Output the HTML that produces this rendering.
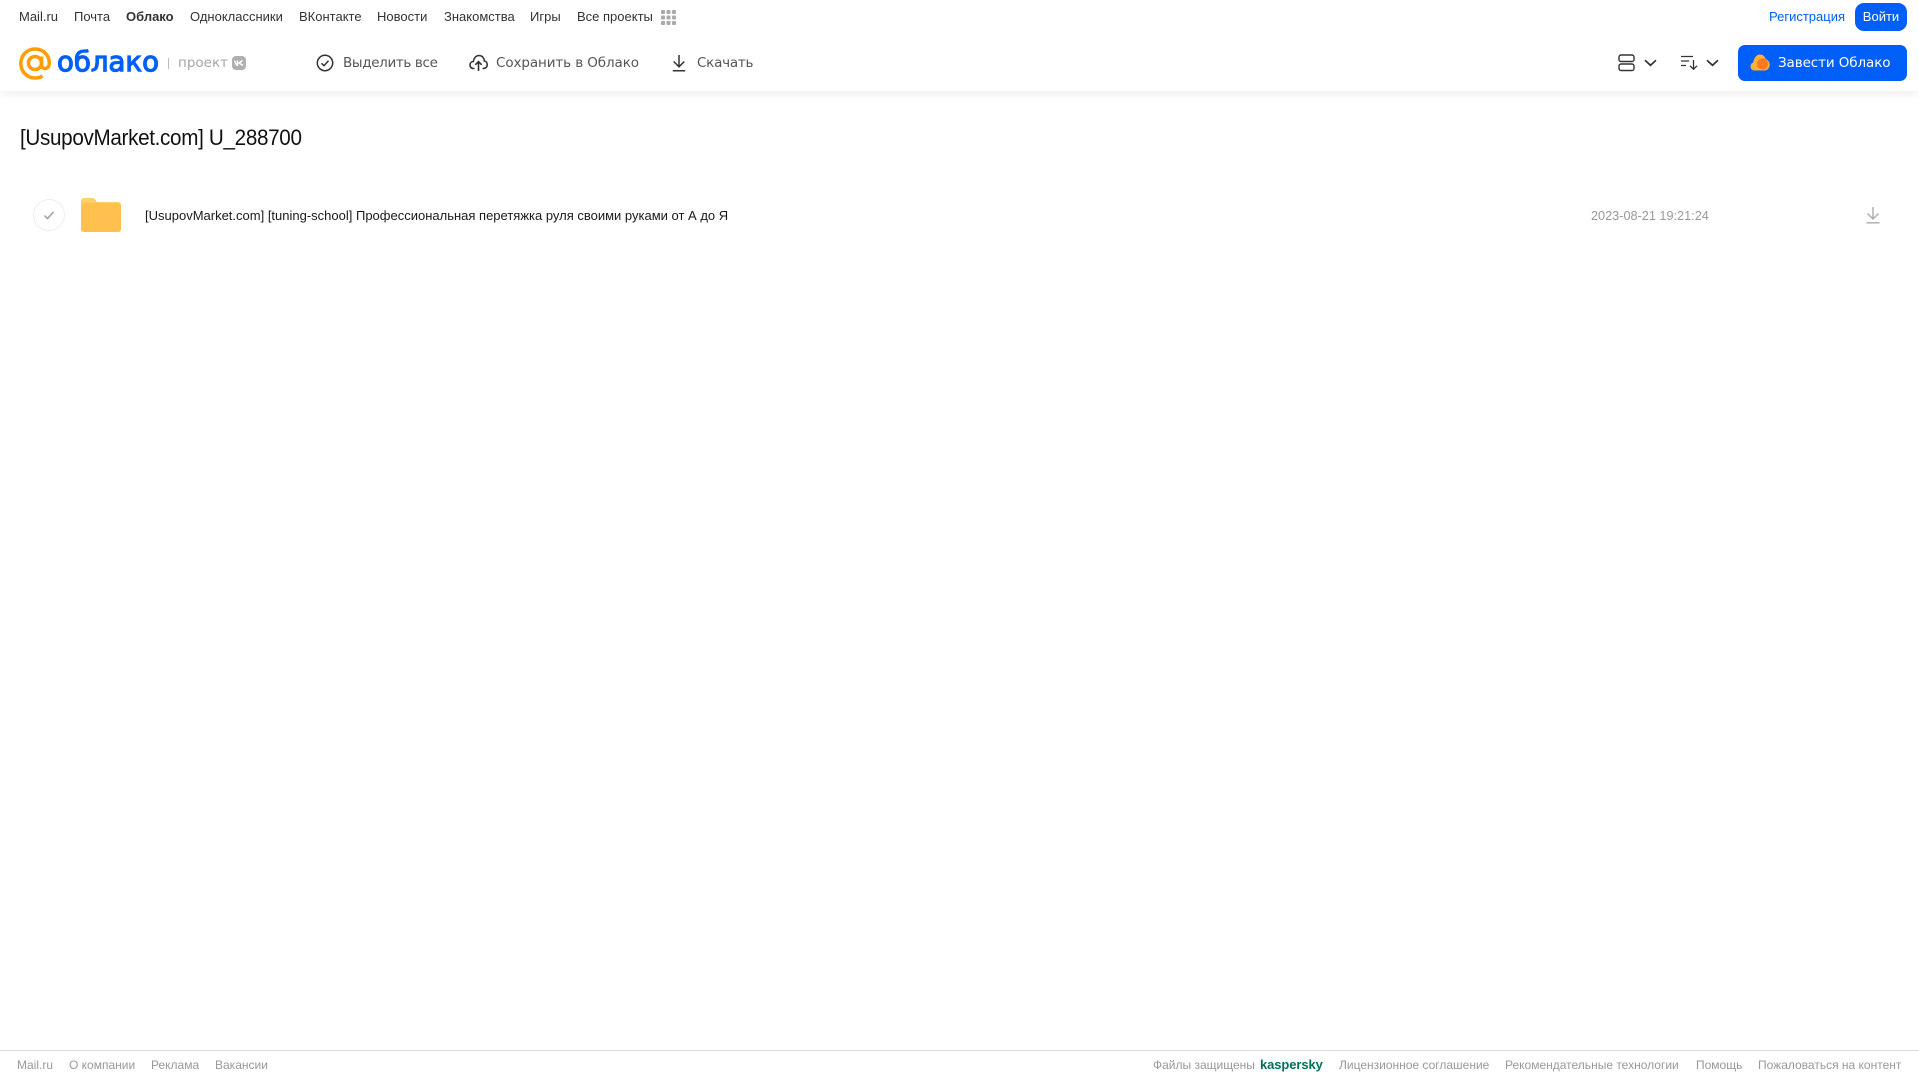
<!DOCTYPE html>
<html lang="ru"><head><meta charset="utf-8"><title>Облако</title>
<style>
html,body{margin:0;padding:0;background:#fff;width:1919px;height:1079px;overflow:hidden}
body{position:relative;font-family:"Liberation Sans",sans-serif}
.t{position:absolute;white-space:nowrap;line-height:20px;height:20px}
.n{top:7px;font-size:13px;color:#333}
.a{top:53px;color:#555;font-family:"DejaVu Sans","Liberation Sans",sans-serif;font-size:13.5px;letter-spacing:-.1px}
.f{top:1055px;font-size:12px;color:#999}
svg{position:absolute;overflow:visible}
</style></head><body>
<div style="position:absolute;left:0;top:0;width:1919px;height:91px;background:#fff;box-shadow:0 2px 10px rgba(0,0,0,.08)"></div>

<span class="t n" style="left:19px">Mail.ru</span>
<span class="t n" style="left:74px">Почта</span>
<span class="t n" style="left:126px;font-weight:bold">Облако</span>
<span class="t n" style="left:190px">Одноклассники</span>
<span class="t n" style="left:299px">ВКонтакте</span>
<span class="t n" style="left:377px">Новости</span>
<span class="t n" style="left:444px">Знакомства</span>
<span class="t n" style="left:530px">Игры</span>
<span class="t n" style="left:577px">Все проекты</span>
<svg style="left:661px;top:10px" width="15" height="15" fill="#aaa"><rect x="0" y="0" width="4" height="4" rx="1"/><rect x="5.5" y="0" width="4" height="4" rx="1"/><rect x="11" y="0" width="4" height="4" rx="1"/><rect x="0" y="5.500" width="4" height="4" rx="1"/><rect x="5.5" y="5.500" width="4" height="4" rx="1"/><rect x="11" y="5.500" width="4" height="4" rx="1"/><rect x="0" y="11" width="4" height="4" rx="1"/><rect x="5.5" y="11" width="4" height="4" rx="1"/><rect x="11" y="11" width="4" height="4" rx="1"/></svg>

<span class="t n" style="left:1769px;color:#005ff9">Регистрация</span>
<div class="t" style="left:1855px;top:3px;width:52px;height:28px;line-height:27px;background:#005ff9;border-radius:9px;color:#fff;font-size:13px;text-align:center">Войти</div>

<svg style="left:19px;top:47px" width="33" height="33" viewBox="0 0 33 33" fill="none" stroke="#ff9e00" stroke-width="3.500"><circle cx="16" cy="16" r="6.500"/><path d="M22.500 9.500v8.500c0 5 7.800 5 7.800-2C30.300 8 24 2 16 2 8 2 1.800 8.500 1.800 16.500S8 31 16 31c3 0 5.500-.7 7.500-2"/></svg>
<span class="t" style="left:57px;top:47px;height:30px;line-height:30px;font-size:28px;color:#005ff9;-webkit-text-stroke:1.200px #005ff9;font-family:'DejaVu Sans',sans-serif;transform-origin:0 50%;transform:scaleX(.985)">облако</span>
<div style="position:absolute;left:168px;top:58px;width:1px;height:11px;background:#bbb"></div>
<span class="t a" style="left:178px;top:53px;color:#a5a5a5;font-size:13.5px;letter-spacing:0">проект</span>
<div style="position:absolute;left:232px;top:56px;width:14px;height:14px;border-radius:4px;background:#b0b0b0"></div>
<svg style="left:234px;top:60px" width="10" height="6" fill="none" stroke="#fff" stroke-width="1.400"><path d="M.5 .5l2 4.500h1V.5M8.500 .5L5 3l4 2.500"/></svg>

<svg style="left:316px;top:54px" width="18" height="18" fill="none" stroke="#333" stroke-width="1.500"><circle cx="9" cy="9" r="7.700"/><path d="M5.500 9.300l2.500 2.400 4.500-5"/></svg>
<span class="t a" style="left:343px;letter-spacing:-.35px">Выделить все</span>
<svg style="left:469px;top:54px" width="19" height="18" fill="none" stroke="#333" stroke-width="1.600"><path d="M5.500 14.500H4.500C2 14.500 1 12.500 1 11c0-2 1.500-3.400 3.300-3.500C5 4 7 1.500 10 1.500c3.200 0 5.200 2.500 5.400 5.500 1.700.2 2.800 1.800 2.800 3.700 0 2-1.400 3.800-3.700 3.800h-1"/><path d="M9.500 17V8M6.300 10.800l3.200-3.200 3.200 3.200"/></svg>
<span class="t a" style="left:496px">Сохранить в Облако</span>
<svg style="left:672px;top:54px" width="14" height="18" fill="none" stroke="#333" stroke-width="1.500"><path d="M7 1v11.500M1.700 7.500L7 12.800l5.300-5.300M.8 16.800h12.400"/></svg>
<span class="t a" style="left:697px;letter-spacing:-.25px">Скачать</span>

<svg style="left:1618px;top:54px" width="17" height="18" fill="none" stroke="#333" stroke-width="1.400"><rect x="1" y="1" width="15" height="6.500" rx="2"/><rect x="1" y="10" width="15" height="6.500" rx="2"/></svg>
<svg style="left:1644px;top:59px" width="13" height="8" fill="none" stroke="#333" stroke-width="1.700"><path d="M1 1.300l5.500 5 5.500-5"/></svg>
<svg style="left:1681px;top:55px" width="17" height="15" fill="none" stroke="#333" stroke-width="1.300"><path d="M0 1.500h12M0 6h8M0 10.500h5M12.500 5v9M9 10.800l3.500 3.400 3.500-3.400"/></svg>
<svg style="left:1706px;top:59px" width="13" height="8" fill="none" stroke="#333" stroke-width="1.700"><path d="M1 1.300l5.500 5 5.500-5"/></svg>

<div style="position:absolute;left:1738px;top:45px;width:169px;height:36px;border-radius:7px;background:#005ff9"></div>
<svg style="left:1750px;top:54px" width="20" height="17"><path d="M4.500 16.500C2 16.500 .5 14.500 .5 12.300c0-2 1.300-3.400 2.800-3.800C3.700 4 6.500 .5 10 .5c3 0 5 2 5.600 4.600 2.500.7 4.100 3 4.100 5.700 0 3-2.200 5.700-5.200 5.700z" fill="#ffb133"/><circle cx="12.500" cy="10" r="5.500" fill="#ff7a1f"/></svg>
<span class="t a" style="left:1778px;top:53px;color:#fff">Завести Облако</span>

<div class="t" style="left:20px;top:123px;height:30px;line-height:30px;font-size:22px;color:#111;letter-spacing:-.35px;transform-origin:0 50%;transform:scaleX(.939)">[UsupovMarket.com] U_288700</div>

<svg style="left:33px;top:199px" width="32" height="32" fill="none"><circle cx="16" cy="16" r="15.500" stroke="#ededed"/><path d="M11.500 16.500l3 3 6-6.500" stroke="#a0a0a0" stroke-width="1.500"/></svg>
<svg style="left:81px;top:198px" width="40" height="34"><path d="M3 0h8c2 0 3 1 4 2.500L16 4h21c1.600 0 3 1.400 3 3v24c0 1.700-1.400 3-3 3H3c-1.600 0-3-1.300-3-3V3c0-1.600 1.400-3 3-3z" fill="#ffd06a"/><path d="M0 8c0-1.500 1.400-3 3-3h34c1.600 0 3 1.400 3 3v23c0 1.700-1.400 3-3 3H3c-1.600 0-3-1.300-3-3z" fill="#ffc14d"/></svg>
<span class="t" style="left:145px;top:206px;font-size:13px;color:#1a1a1a">[UsupovMarket.com] [tuning-school] Профессиональная перетяжка руля своими руками от А до Я</span>
<span class="t" style="left:1591px;top:206px;font-size:12.7px;color:#999">2023-08-21 19:21:24</span>
<svg style="left:1866px;top:207px" width="14" height="17" fill="none" stroke="#aaa" stroke-width="1.400"><path d="M7 0v11.500M1.500 6.500L7 12l5.500-5.500M.5 15.800h13"/></svg>

<div style="position:absolute;left:0;top:1050px;width:1919px;height:1px;background:#ddd"></div>
<span class="t f" style="left:17px">Mail.ru</span>
<span class="t f" style="left:69px">О компании</span>
<span class="t f" style="left:151px">Реклама</span>
<span class="t f" style="left:215px">Вакансии</span>
<span class="t f" style="left:1153px">Файлы защищены</span>
<span class="t f" style="left:1260px;color:#00705a;font-weight:bold;font-size:13px;letter-spacing:-.1px">kaspersky</span>
<span class="t f" style="left:1339px">Лицензионное соглашение</span>
<span class="t f" style="left:1505px">Рекомендательные технологии</span>
<span class="t f" style="left:1696px">Помощь</span>
<span class="t f" style="left:1758px">Пожаловаться на контент</span>
</body></html>
